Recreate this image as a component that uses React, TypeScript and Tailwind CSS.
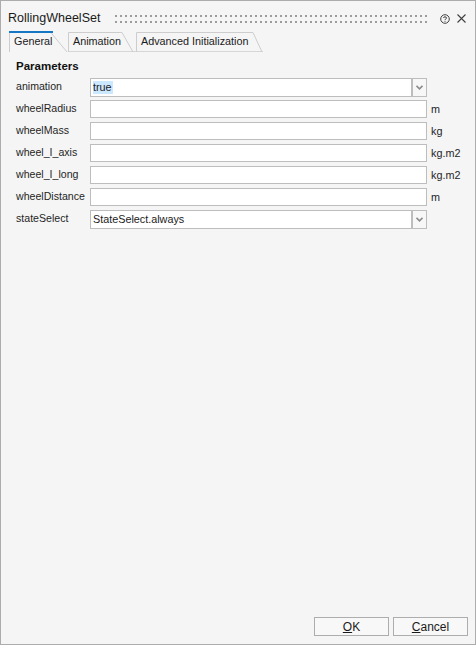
import React from 'react';

const font = { fontFamily: '"Liberation Sans", Arial, sans-serif' };

interface TabProps {
  label: string;
  width: number;
  active?: boolean;
  path: string;
  textLeft: string;
}

const Tab: React.FC<TabProps> = ({ label, width, active = false, path, textLeft }) => (
  <div className={`relative h-[21px] flex items-center ${textLeft}`} style={{ width }}>
    <svg className="absolute inset-0" width={width} height={21}>
      {!active && <path d={`M0 20.5 H${width}`} stroke="#d6d6d6" fill="none" />}
      <path d={path} stroke="#cdcdcd" fill="none" />
      {active && <rect x={0} y={0} width={44} height={2} fill="#1677c4" />}
    </svg>
    <span className="relative text-[10.8px] text-[#1b1b1b] leading-none">{label}</span>
  </div>
);

interface Param {
  name: string;
  value?: string;
  unit?: string;
  combo?: boolean;
  selected?: boolean;
}

const params: Param[] = [
  { name: 'animation', value: 'true', combo: true, selected: true },
  { name: 'wheelRadius', unit: 'm' },
  { name: 'wheelMass', unit: 'kg' },
  { name: 'wheel_I_axis', unit: 'kg.m2' },
  { name: 'wheel_I_long', unit: 'kg.m2' },
  { name: 'wheelDistance', unit: 'm' },
  { name: 'stateSelect', value: 'StateSelect.always', combo: true },
];

const ParamRow: React.FC<{ p: Param }> = ({ p }) => (
  <div className="h-[22px] flex items-center">
    <span className="w-[74px] text-[10.6px] text-[#1f1f1f]">{p.name}</span>
    {p.combo ? (
      <div className="w-[337px] h-[19px] flex">
        <div className="flex-1 border border-[#bdbdbd] bg-white flex items-center pl-[2px]">
          <span
            className={`text-[10.8px] leading-[13px] text-[#1b1b1b] ${p.selected ? 'bg-[#cce8ff] pr-[1px]' : ''}`}
          >
            {p.value}
          </span>
        </div>
        <div className="w-[15px] border border-[#bdbdbd] bg-[#f7f7f7] flex items-center justify-center">
          <svg width="7" height="5" viewBox="0 0 7 5">
            <path d="M0.5 0.8 L3.5 3.8 L6.5 0.8" stroke="#8c8c8c" strokeWidth="1.6" fill="none" />
          </svg>
        </div>
      </div>
    ) : (
      <div className="w-[337px] h-[18px] border border-[#bdbdbd] bg-white" />
    )}
    {p.unit && <span className="ml-[4px] text-[10.8px] text-[#1f1f1f]">{p.unit}</span>}
  </div>
);

export default function App() {
  return (
    <div
      className="w-[476px] h-[645px] border border-[#acacac] bg-[#f5f5f5] flex flex-col"
      style={font}
    >
      {/* title bar */}
      <div className="h-[30px] pt-[5px] pl-[7px] pr-[9px] flex items-center">
        <span className="text-[12.5px] text-[#1a1a1a]">RollingWheelSet</span>
        <div className="flex-1 min-w-0 ml-[15px] mr-[10px]">
          <svg className="block w-full h-[8px]">
            <defs>
              <pattern id="grip" width="5" height="8" patternUnits="userSpaceOnUse">
                <rect x="0" y="0" width="2" height="2" fill="#9c9c9c" />
                <rect x="0" y="6" width="2" height="2" fill="#9c9c9c" />
              </pattern>
            </defs>
            <rect width="100%" height="100%" fill="url(#grip)" />
          </svg>
        </div>
        <svg width="10" height="10" viewBox="0 0 10 10" className="mr-[7px]">
          <circle cx="5" cy="5" r="4.3" stroke="#404040" strokeWidth="1" fill="none" />
          <path d="M3.5 4 C3.5 2.4 6.5 2.4 6.5 4 C6.5 5 5 5 5 6" stroke="#404040" strokeWidth="1" fill="none" />
          <rect x="4.5" y="6.8" width="1" height="1" fill="#404040" />
        </svg>
        <svg width="9" height="9" viewBox="0 0 9 9">
          <path d="M0.5 0.5 L8.5 8.5 M8.5 0.5 L0.5 8.5" stroke="#404040" strokeWidth="1.1" fill="none" />
        </svg>
      </div>

      {/* tabs */}
      <div className="flex pl-[8px]">
        <Tab label="General" width={59} active path="M0.5 21 V0.5 H41 L58 21" textLeft="pl-[5px]" />
        <Tab label="Animation" width={67} path="M0.5 21 V1.5 H54 L65 21" textLeft="pl-[5px]" />
        <Tab label="Advanced Initialization" width={128} path="M1.5 21 V1.5 H118 L127 21" textLeft="pl-[6px]" />
      </div>

      {/* parameters */}
      <div className="pt-[7px] pl-[15px]">
        <div className="h-[14px] leading-[14px] text-[11.5px] font-bold text-[#111]">Parameters</div>
        <div className="mt-[3px] flex flex-col">
          {params.map((p) => (
            <ParamRow key={p.name} p={p} />
          ))}
        </div>
      </div>

      {/* buttons */}
      <div className="mt-auto flex justify-end gap-[4px] pr-[7px] pb-[8px]">
        <button className="w-[75px] h-[19px] border border-[#adadad] bg-[#f8f8f8] text-[12px] text-[#1b1b1b] leading-none">
          <span className="underline underline-offset-1">O</span>K
        </button>
        <button className="w-[75px] h-[19px] border border-[#adadad] bg-[#f8f8f8] text-[12px] text-[#1b1b1b] leading-none">
          <span className="underline underline-offset-1">C</span>ancel
        </button>
      </div>
    </div>
  );
}
